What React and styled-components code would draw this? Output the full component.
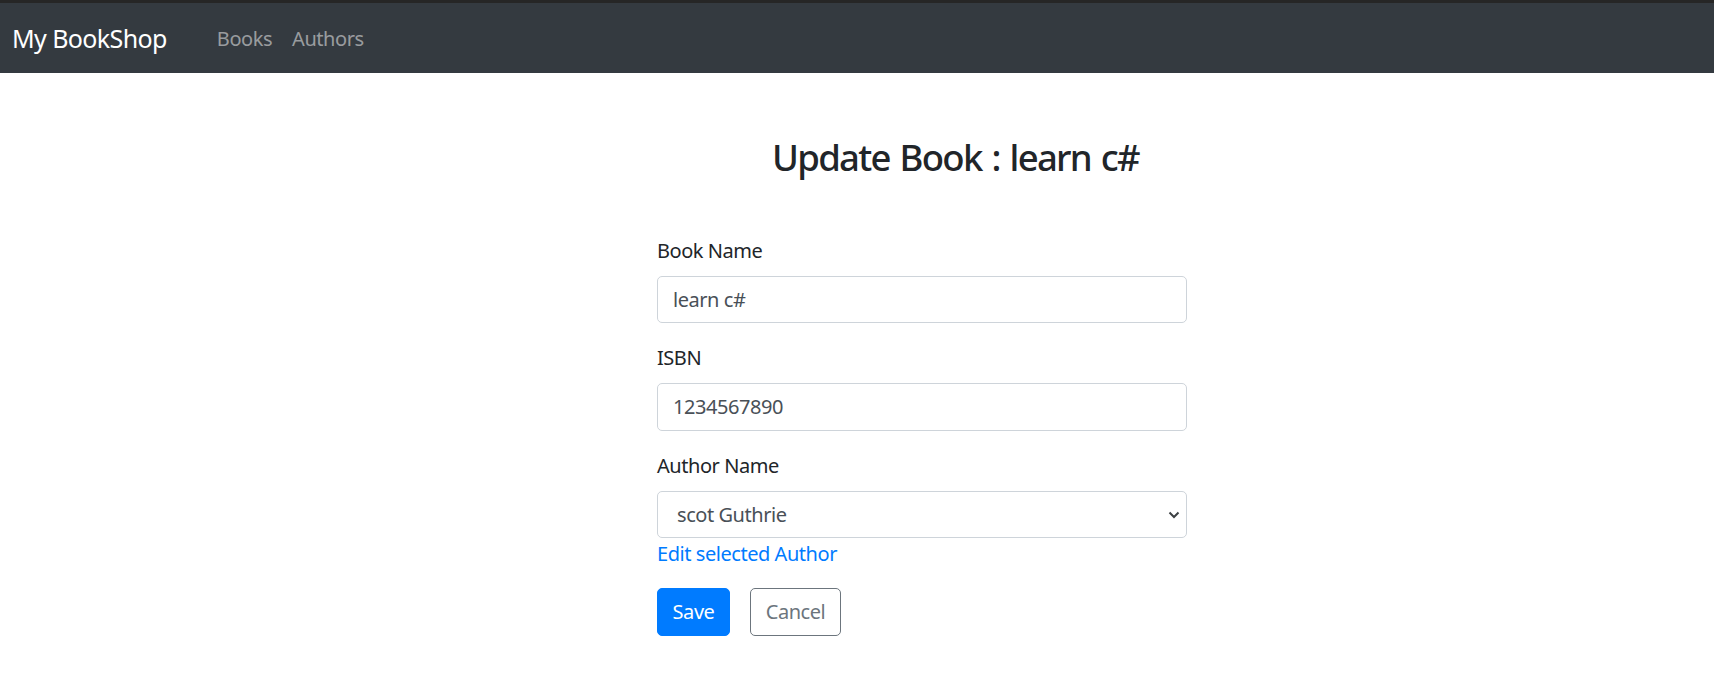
import React from 'react';
import styled, { createGlobalStyle } from 'styled-components';

const Global = createGlobalStyle`
  html, body { margin: 0; padding: 0; background: #fff; }
  body { font-family: "Noto Sans", "Open Sans", sans-serif; color: #212529; letter-spacing: -0.45px; }
  * { box-sizing: border-box; }
`;

const Nav = styled.nav`
  height: 73px;
  border-top: 3px solid #262626;
  background: #343a40;
  display: flex;
  align-items: center;
  padding: 0 12px;
`;

const Brand = styled.a`
  font-size: 25px;
  color: #fff;
  text-decoration: none;
  white-space: nowrap;
  letter-spacing: -0.6px;
  margin-right: 40px;
`;

const NavLink = styled.a`
  font-size: 20px;
  color: rgba(255, 255, 255, 0.5);
  text-decoration: none;
  padding: 0 10px;
`;

const Main = styled.main`
  padding-left: 657px;
`;

const Column = styled.div`
  width: 530px;
`;

const Heading = styled.h2`
  font-size: 36.5px;
  font-weight: 500;
  line-height: 48px;
  letter-spacing: -1.7px;
  word-spacing: 2px;
  margin: 60px 0 54.5px;
  padding-left: 115px;
  white-space: nowrap;
  color: #212529;
`;

const Group = styled.div`
  margin-bottom: ${p => (p.$tight ? '0' : '20px')};
`;

const Label = styled.label`
  display: block;
  font-size: 20px;
  line-height: 30px;
  margin-bottom: 10px;
  color: #212529;
`;

const Input = styled.input`
  display: block;
  width: 100%;
  height: 47.5px;
  padding: 0 15px;
  font-family: inherit;
  font-size: 20px;
  letter-spacing: -0.45px;
  color: #495057;
  background: #fff;
  border: 1px solid #ced4da;
  border-radius: 5px;
  outline: none;
`;

const SelectWrap = styled.div`
  position: relative;
`;

const Select = styled.select`
  display: block;
  width: 100%;
  height: 47.5px;
  padding: 0 17px 0 19px;
  font-family: inherit;
  font-size: 20px;
  letter-spacing: -0.45px;
  color: #495057;
  background: #fff;
  border: 1px solid #ced4da;
  border-radius: 5px;
  appearance: none;
  -webkit-appearance: none;
  outline: none;
`;

const Chevron = styled.svg`
  position: absolute;
  right: 7px;
  top: 20px;
  width: 12px;
  height: 8px;
  pointer-events: none;
`;

const EditLink = styled.a`
  display: block;
  font-size: 20px;
  line-height: 30px;
  color: #007bff;
  text-decoration: none;
  margin-top: 1px;
`;

const Actions = styled.div`
  display: flex;
  gap: 20px;
  margin-top: 19px;
`;

const Button = styled.button`
  height: 47.5px;
  width: ${p => p.$w}px;
  padding: 0;
  font-family: inherit;
  font-size: 20px;
  letter-spacing: -0.45px;
  line-height: 30px;
  border-radius: 5px;
  border: 1px solid ${p => (p.$primary ? '#007bff' : '#6c757d')};
  background: ${p => (p.$primary ? '#007bff' : '#fff')};
  color: ${p => (p.$primary ? '#fff' : '#6c757d')};
  cursor: pointer;
`;

export default function App() {
  return (
    <>
      <Global />
      <Nav>
        <Brand href="#">My BookShop</Brand>
        <NavLink href="#">Books</NavLink>
        <NavLink href="#">Authors</NavLink>
      </Nav>
      <Main>
        <Column>
          <Heading>Update Book : learn c#</Heading>
          <Group>
            <Label>Book Name</Label>
            <Input defaultValue="learn c#" />
          </Group>
          <Group>
            <Label>ISBN</Label>
            <Input defaultValue="1234567890" />
          </Group>
          <Group $tight>
            <Label>Author Name</Label>
            <SelectWrap>
              <Select defaultValue="scot">
                <option value="scot">scot Guthrie</option>
              </Select>
              <Chevron viewBox="0 0 12 8">
                <path d="M1.5 1.5 L6 6 L10.5 1.5" fill="none" stroke="#3c4043" strokeWidth="2" />
              </Chevron>
            </SelectWrap>
            <EditLink href="#">Edit selected Author</EditLink>
          </Group>
          <Actions>
            <Button $primary $w={73}>Save</Button>
            <Button $w={91}>Cancel</Button>
          </Actions>
        </Column>
      </Main>
    </>
  );
}
